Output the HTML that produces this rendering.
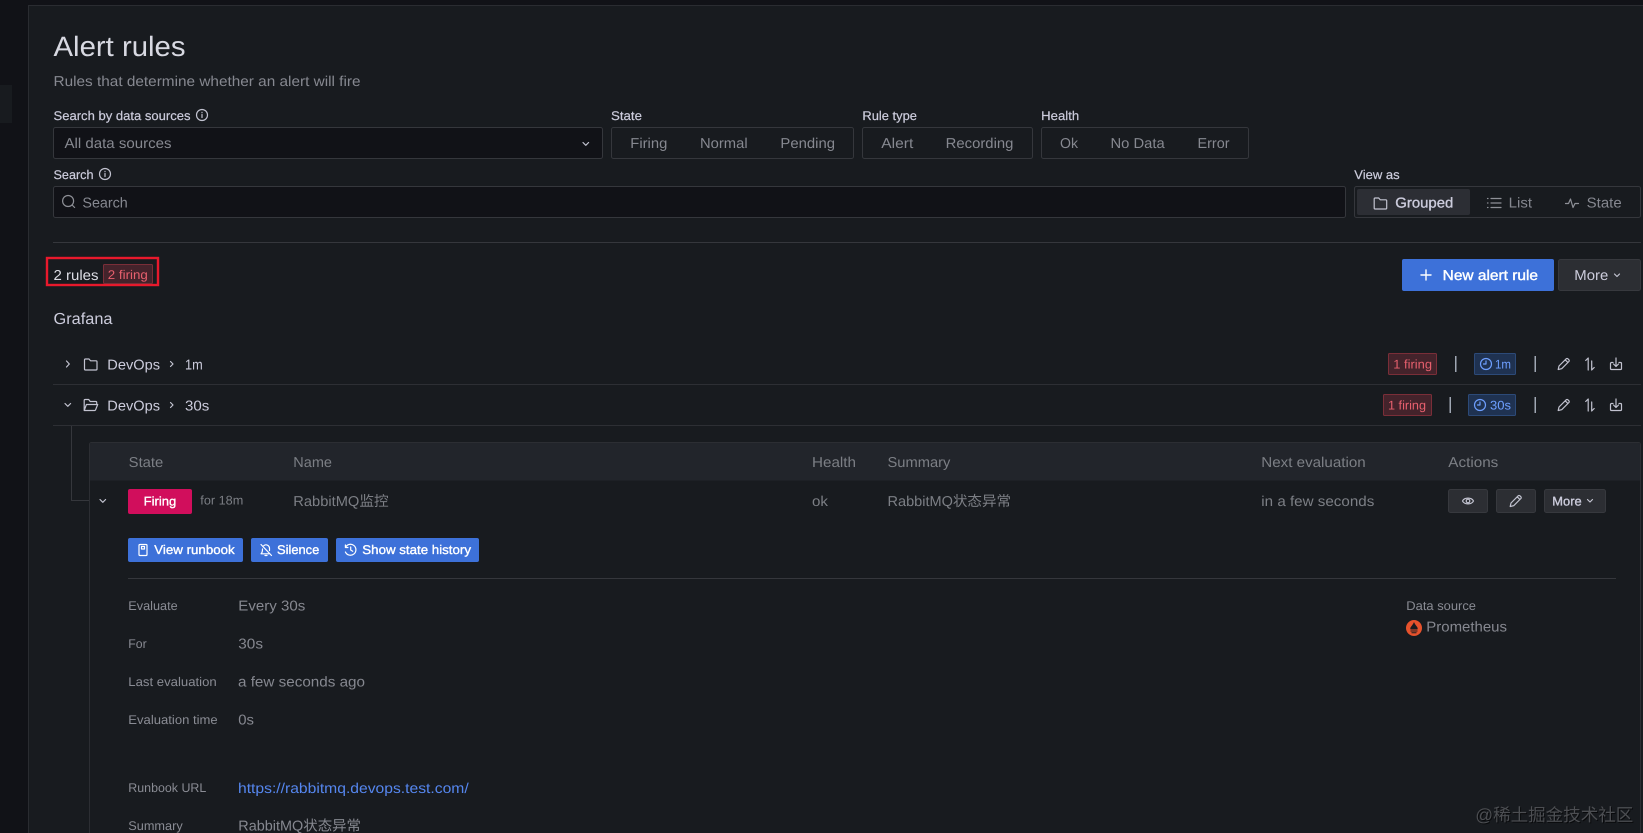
<!DOCTYPE html>
<html lang="en"><head><meta charset="utf-8"><title>Alert rules</title>
<style>
html,body{margin:0;padding:0;width:1643px;height:833px;overflow:hidden;background:#111217}
svg{display:block}
text{font-family:"Liberation Sans","Noto Sans CJK SC",sans-serif;font-size:14.3px;fill:#868890;text-rendering:geometricPrecision}
.s{font-size:12.6px}
.l{font-size:12.6px;fill:#ccccdc;stroke:#ccccdc;stroke-width:.2px}
.d{font-size:12.6px;fill:#8a8c94}
.m{fill:#ccccdc}
.e{stroke:#ccccdc;stroke-width:.35px}
.w{fill:#fff;stroke:#fff;stroke-width:.35px;font-size:12.6px}
.h{fill:#7c7f85}
.b{fill:none;stroke:#35373c}
.i{fill:none;stroke:#c2c3d0;stroke-width:1.2;stroke-linecap:round;stroke-linejoin:round}
.g{fill:none;stroke:#8e9097;stroke-width:1.2;stroke-linecap:round;stroke-linejoin:round}
.c{fill:none;stroke:#fff;stroke-width:1.2;stroke-linecap:round;stroke-linejoin:round}
.a{fill:none;stroke:#6e9fff;stroke-width:1.2;stroke-linecap:round;stroke-linejoin:round}
.f{fill:#e8606e;font-size:12.6px}
.t{fill:#6e9fff;font-size:12.6px}
</style></head><body>
<svg width="1643" height="833" viewBox="0 0 1643 833" xmlns="http://www.w3.org/2000/svg">
<rect width="1643" height="833" fill="#111217"/>
<rect x="0" y="85" width="12" height="38" fill="#181b1f"/>
<rect x="28.5" y="5.5" width="1620" height="840" fill="#181b1f" stroke="#2a2c31"/>

<text x="53.5" y="56" textLength="132" lengthAdjust="spacingAndGlyphs" style="font-size:28px;fill:#d8d9e2">Alert rules</text>
<text x="53.5" y="86" textLength="307" lengthAdjust="spacingAndGlyphs">Rules that determine whether an alert will fire</text>

<text x="53.5" y="120" class="l" textLength="137" lengthAdjust="spacingAndGlyphs">Search by data sources</text>
<g transform="translate(202 115)" class="i"><circle r="5.5"/><path d="M0 -.5V2.5M0 -2.6V-2.4"/></g>
<rect class="b" x="53.5" y="127.5" width="549" height="31" rx="2" style="fill:#111217"/>
<text x="64.5" y="148" textLength="107" lengthAdjust="spacingAndGlyphs">All data sources</text>
<path class="i" d="M583 142.5l2.8 2.8 2.8-2.8"/>

<text x="611" y="120" class="l" textLength="31" lengthAdjust="spacingAndGlyphs">State</text>
<rect class="b" x="611.5" y="127.5" width="242" height="31" rx="2"/>
<text x="630.3" y="148" textLength="37" lengthAdjust="spacingAndGlyphs">Firing</text>
<text x="700" y="148" textLength="47.6" lengthAdjust="spacingAndGlyphs">Normal</text>
<text x="780.4" y="148" textLength="54.6" lengthAdjust="spacingAndGlyphs">Pending</text>

<text x="862.4" y="120" class="l" textLength="54.6" lengthAdjust="spacingAndGlyphs">Rule type</text>
<rect class="b" x="862.5" y="127.5" width="170" height="31" rx="2"/>
<text x="881.3" y="148" textLength="32" lengthAdjust="spacingAndGlyphs">Alert</text>
<text x="945.7" y="148" textLength="67.7" lengthAdjust="spacingAndGlyphs">Recording</text>

<text x="1041.2" y="120" class="l" textLength="38" lengthAdjust="spacingAndGlyphs">Health</text>
<rect class="b" x="1041.5" y="127.5" width="207" height="31" rx="2"/>
<text x="1060" y="148" textLength="18" lengthAdjust="spacingAndGlyphs">Ok</text>
<text x="1110.5" y="148" textLength="54.2" lengthAdjust="spacingAndGlyphs">No Data</text>
<text x="1197.5" y="148" textLength="32" lengthAdjust="spacingAndGlyphs">Error</text>

<text x="53.5" y="179" class="l" textLength="40" lengthAdjust="spacingAndGlyphs">Search</text>
<g transform="translate(105 174)" class="i"><circle r="5.5"/><path d="M0 -.5V2.5M0 -2.6V-2.4"/></g>
<rect class="b" x="53.5" y="186.5" width="1292" height="31" rx="2" style="fill:#111217"/>
<g transform="translate(68.6 201.5)" class="g"><circle cx="-.5" cy="-.5" r="5.5"/><path d="M3.5 3.5L6 6"/></g>
<text x="82.4" y="207.5" textLength="45.4" lengthAdjust="spacingAndGlyphs">Search</text>

<text x="1354.3" y="179" class="l" textLength="45.4" lengthAdjust="spacingAndGlyphs">View as</text>
<rect class="b" x="1354.5" y="186.5" width="286" height="31" rx="2"/>
<rect x="1357" y="189" width="113" height="26" rx="2" fill="#2c2e34"/>
<path class="i" transform="translate(1380.7 203)" d="M-6.5 -4a1 1 0 0 1 1-1h3.500l1.500 1.800h5.500a1 1 0 0 1 1 1v7.200a1 1 0 0 1-1 1h-10.500a1 1 0 0 1-1-1z"/>
<text x="1395.3" y="207.5" class="m e" textLength="58" lengthAdjust="spacingAndGlyphs">Grouped</text>
<path class="g" d="M1491 198.5h10M1491 203h10M1491 207.5h10M1487.5 198.5h.5M1487.5 203h.5M1487.5 207.5h.5"/>
<text x="1508.7" y="207.5" textLength="23.3" lengthAdjust="spacingAndGlyphs">List</text>
<path class="g" d="M1565.5 203.5h3l2 -4.500 2.500 8.500 2 -4h3.500"/>
<text x="1586.7" y="207.5" textLength="35" lengthAdjust="spacingAndGlyphs">State</text>

<rect x="53" y="242" width="1588" height="1" fill="#35373c"/>

<rect x="47" y="258" width="111" height="27" fill="none" stroke="#e8192c" stroke-width="2.4"/>
<text x="53.5" y="280" class="m" style="fill:#dcdde4" textLength="45" lengthAdjust="spacingAndGlyphs">2 rules</text>
<rect x="103.5" y="264.5" width="49" height="19" rx="1" fill="#44232b" stroke="#7a2e38"/>
<text x="107.8" y="279" class="f" textLength="40" lengthAdjust="spacingAndGlyphs">2 firing</text>

<rect x="1402" y="259" width="152" height="32" rx="2" fill="#3d71d9"/>
<path class="c" style="stroke-width:1.4" d="M1426 270v10M1421 275h10"/>
<text x="1442.7" y="280" style="fill:#fff;stroke:#fff;stroke-width:.4px" textLength="95.3" lengthAdjust="spacingAndGlyphs">New alert rule</text>
<rect x="1558.5" y="259.5" width="82" height="31" rx="2" fill="#2c2e33" stroke="#37393e"/>
<text x="1574.3" y="280" class="m" textLength="34" lengthAdjust="spacingAndGlyphs">More</text>
<path class="i" d="M1614.5 274l2.500 2.500 2.500-2.500"/>

<text x="53.5" y="324" class="m" style="font-size:16px" textLength="59" lengthAdjust="spacingAndGlyphs">Grafana</text>

<path class="i" d="M66.5 361l2.800 3-2.800 3"/>
<path class="i" transform="translate(91 364)" d="M-6.5 -4a1 1 0 0 1 1-1h3.500l1.500 1.800h5.500a1 1 0 0 1 1 1v7.200a1 1 0 0 1-1 1h-10.500a1 1 0 0 1-1-1z"/>
<text x="107.3" y="369.300" class="m" textLength="52.7" lengthAdjust="spacingAndGlyphs">DevOps</text>
<path class="i" d="M170.5 361.5l2.500 2.500-2.500 2.500"/>
<text x="185" y="369.3" class="m" textLength="17.7" lengthAdjust="spacingAndGlyphs">1m</text>

<rect x="1388.5" y="353.5" width="48" height="21" rx="1" fill="#44232b" stroke="#7a2e38"/>
<text x="1393.3" y="368.3" class="f" textLength="38.7" lengthAdjust="spacingAndGlyphs">1 firing</text>
<rect x="1455" y="356" width="1.5" height="16" fill="#9fa7b3"/>
<rect x="1474.5" y="353.5" width="41" height="21" rx="1" fill="#1f3251" stroke="#2c4a78"/>
<g class="a" transform="translate(1486 364)"><circle r="5.5"/><path d="M0 -3V0L-2.500 0"/></g>
<text x="1495" y="368.3" class="t" textLength="16" lengthAdjust="spacingAndGlyphs">1m</text>
<rect x="1534.5" y="356" width="1.5" height="16" fill="#9fa7b3"/>
<path class="i" transform="translate(1563.7 364)" d="M-5.5 5.500l.8-3.500L2.500-5.200a1.200 1.200 0 0 1 1.700 0l1 1a1.200 1.200 0 0 1 0 1.700L-2 4.700zM1.500-4.200L4.200-1.500"/>
<path class="i" transform="translate(1589.7 364)" d="M-1.5 6V-6L-4 -3.500M2 -3V6L4.500 3.500"/>
<path class="i" transform="translate(1616 364)" d="M-3-1.500h-1.500a1 1 0 0 0-1 1V4.500a1 1 0 0 0 1 1h9a1 1 0 0 0 1-1V-.5a1 1 0 0 0-1-1H3M0-6V2.500M-2.500 0L0 2.500 2.500 0"/>
<rect x="53" y="384" width="1588" height="1" fill="#2d2f34"/>

<path class="i" d="M65 403.5l2.800 2.800 2.800-2.800"/>
<path class="i" transform="translate(90.7 405)" d="M-6.5 5.500v-10a1 1 0 0 1 1-1h3.500l1.500 2h5.500a1 1 0 0 1 1 1v2M-6.500 5.500l2.200-6h11.300l-2.200 5.500a1 1 0 0 1-1 .5z"/>
<text x="107.3" y="410.3" class="m" textLength="52.7" lengthAdjust="spacingAndGlyphs">DevOps</text>
<path class="i" d="M170.5 402.5l2.500 2.500-2.500 2.500"/>
<text x="185" y="410.3" class="m" textLength="24.3" lengthAdjust="spacingAndGlyphs">30s</text>

<rect x="1383.5" y="394.5" width="48" height="21" rx="1" fill="#44232b" stroke="#7a2e38"/>
<text x="1388" y="409.3" class="f" textLength="38" lengthAdjust="spacingAndGlyphs">1 firing</text>
<rect x="1449.5" y="397" width="1.5" height="16" fill="#9fa7b3"/>
<rect x="1468.5" y="394.5" width="47" height="21" rx="1" fill="#1f3251" stroke="#2c4a78"/>
<g class="a" transform="translate(1480 405)"><circle r="5.5"/><path d="M0 -3V0L-2.500 0"/></g>
<text x="1490" y="409.3" class="t" textLength="21" lengthAdjust="spacingAndGlyphs">30s</text>
<rect x="1534.5" y="397" width="1.5" height="16" fill="#9fa7b3"/>
<path class="i" transform="translate(1563.7 405)" d="M-5.5 5.500l.8-3.500L2.500-5.200a1.200 1.200 0 0 1 1.700 0l1 1a1.200 1.200 0 0 1 0 1.700L-2 4.700zM1.500-4.200L4.200-1.500"/>
<path class="i" transform="translate(1589.7 405)" d="M-1.500 6V-6L-4 -3.500M2 -3V6L4.500 3.500"/>
<path class="i" transform="translate(1616 405)" d="M-3-1.500h-1.500a1 1 0 0 0-1 1V4.500a1 1 0 0 0 1 1h9a1 1 0 0 0 1-1V-.5a1 1 0 0 0-1-1H3M0-6V2.500M-2.500 0L0 2.500 2.500 0"/>
<rect x="53" y="425" width="1588" height="1" fill="#2d2f34"/>

<path d="M71.5 426V500.5H89" fill="none" stroke="#35373c"/>
<rect x="89.5" y="442.5" width="1551" height="400" rx="2" fill="#181b1f" stroke="#2c2e33"/>
<path d="M90 480.5V445a2 2 0 0 1 2-2H1638a2 2 0 0 1 2 2V480.5z" fill="#22252b"/>

<text x="128.7" y="467" class="h" textLength="34.6" lengthAdjust="spacingAndGlyphs">State</text>
<text x="293.3" y="467" class="h" textLength="38.7" lengthAdjust="spacingAndGlyphs">Name</text>
<text x="812" y="467" class="h" textLength="44" lengthAdjust="spacingAndGlyphs">Health</text>
<text x="887.5" y="467" class="h" textLength="62.9" lengthAdjust="spacingAndGlyphs">Summary</text>
<text x="1261.3" y="467" class="h" textLength="104.4" lengthAdjust="spacingAndGlyphs">Next evaluation</text>
<text x="1448.3" y="467" class="h" textLength="50" lengthAdjust="spacingAndGlyphs">Actions</text>

<path class="i" d="M100 499.5l2.800 2.800 2.800-2.800"/>
<rect x="128" y="489" width="64" height="25" rx="2" fill="#d10e5c"/>
<text x="143.7" y="505.3" class="w" textLength="32.6" lengthAdjust="spacingAndGlyphs">Firing</text>
<text x="200.3" y="504.3" class="s h" textLength="43" lengthAdjust="spacingAndGlyphs">for 18m</text>
<text x="293.3" y="506" class="h" textLength="95.4" lengthAdjust="spacingAndGlyphs">RabbitMQ监控</text>
<text x="812" y="506" class="h" textLength="16" lengthAdjust="spacingAndGlyphs">ok</text>
<text x="887.5" y="506" class="h" textLength="123.5" lengthAdjust="spacingAndGlyphs">RabbitMQ状态异常</text>
<text x="1261.3" y="506" class="h" textLength="113" lengthAdjust="spacingAndGlyphs">in a few seconds</text>

<rect x="1448.5" y="489.5" width="39" height="23" rx="2" fill="#2c2e33" stroke="#37393e"/>
<g class="i" transform="translate(1468 501)"><path d="M-5.500 0C-3.500-3.800 3.500-3.800 5.500 0 3.500 3.800-3.500 3.800-5.500 0z"/><circle r="1.800"/></g>
<rect x="1496.5" y="489.5" width="39" height="23" rx="2" fill="#2c2e33" stroke="#37393e"/>
<path class="i" transform="translate(1515.7 501)" d="M-5.500 5.500l.8-3.500L2.500-5.200a1.200 1.200 0 0 1 1.700 0l1 1a1.200 1.200 0 0 1 0 1.700L-2 4.700zM1.500-4.200L4.200-1.500"/>
<rect x="1544.5" y="489.5" width="61" height="23" rx="2" fill="#2c2e33" stroke="#37393e"/>
<text x="1552.3" y="505.3" class="m e" style="font-size:12.6px" textLength="29.4" lengthAdjust="spacingAndGlyphs">More</text>
<path class="i" d="M1587.5 499.5l2.500 2.500 2.500-2.500"/>

<rect x="128" y="538" width="115" height="24" rx="2" fill="#3d71d9"/>
<g class="c" transform="translate(143 550)"><rect x="-4" y="-5.5" width="8" height="11" rx="1"/><rect x="-1.5" y="-3.5" width="3" height="2.5"/></g>
<text x="154.3" y="554" class="w" textLength="80.4" lengthAdjust="spacingAndGlyphs">View runbook</text>
<rect x="251" y="538" width="77" height="24" rx="2" fill="#3d71d9"/>
<g class="c" transform="translate(266 550)"><path d="M-5 -5.500L5.500 5.500M-3.500 -1C-3.500 2-4 3-5 3.800H3M-2.200-4.400C.2-6.200 3.500-4.500 3.500-1.500V.5M-1 5.500H1"/></g>
<text x="277" y="554" class="w" textLength="42.3" lengthAdjust="spacingAndGlyphs">Silence</text>
<rect x="336" y="538" width="143" height="24" rx="2" fill="#3d71d9"/>
<g class="c" transform="translate(350.7 550)"><path d="M-5.300-2.500A5.500 5.500 0 1 1-5.300 2M-5.300-5V-2.500H-2.800M0-3V0L2 1.300"/></g>
<text x="362.3" y="554" class="w" textLength="108.7" lengthAdjust="spacingAndGlyphs">Show state history</text>

<rect x="128" y="578" width="1488" height="1" fill="#35373c"/>

<text x="128.3" y="610" class="d" textLength="49.4" lengthAdjust="spacingAndGlyphs">Evaluate</text>
<text x="238.3" y="610.7" textLength="67" lengthAdjust="spacingAndGlyphs">Every 30s</text>
<text x="128.3" y="648" class="d" textLength="18.4" lengthAdjust="spacingAndGlyphs">For</text>
<text x="238.3" y="648.7" textLength="24.7" lengthAdjust="spacingAndGlyphs">30s</text>
<text x="128.3" y="686" class="d" textLength="88.4" lengthAdjust="spacingAndGlyphs">Last evaluation</text>
<text x="238" y="686.7" textLength="127" lengthAdjust="spacingAndGlyphs">a few seconds ago</text>
<text x="128.3" y="724" class="d" textLength="89.4" lengthAdjust="spacingAndGlyphs">Evaluation time</text>
<text x="238.3" y="724.7" textLength="15.7" lengthAdjust="spacingAndGlyphs">0s</text>
<text x="128.3" y="792" class="d" textLength="78" lengthAdjust="spacingAndGlyphs">Runbook URL</text>
<text x="238" y="793" style="fill:#5586ee" textLength="230.7" lengthAdjust="spacingAndGlyphs">https://rabbitmq.devops.test.com/</text>
<text x="128.3" y="830" class="d" textLength="54.4" lengthAdjust="spacingAndGlyphs">Summary</text>
<text x="238.3" y="830.7" textLength="122.7" lengthAdjust="spacingAndGlyphs">RabbitMQ状态异常</text>

<text x="1406.3" y="610" class="d" textLength="69.7" lengthAdjust="spacingAndGlyphs">Data source</text>
<g transform="translate(1414 628)"><circle r="8" fill="#e6522c"/><path d="M-3.500 1.500C-4.500-1-1.500-2 0-6 1.500-2 4.500-1 3.500 1.500z" fill="#1a1c20"/><path d="M-3.500 3H3.500M-2.500 4.800H2.500" stroke="#1a1c20" fill="none"/></g>
<text x="1426.3" y="631.7" textLength="80.7" lengthAdjust="spacingAndGlyphs">Prometheus</text>

<text x="1476.3" y="822" style="font-size:17.6px;fill:#000;opacity:.6" textLength="158" lengthAdjust="spacingAndGlyphs">@稀土掘金技术社区</text>
<text x="1475.3" y="821" style="font-size:17.6px;fill:#4c4e52" textLength="158" lengthAdjust="spacingAndGlyphs">@稀土掘金技术社区</text>
</svg>
</body></html>
